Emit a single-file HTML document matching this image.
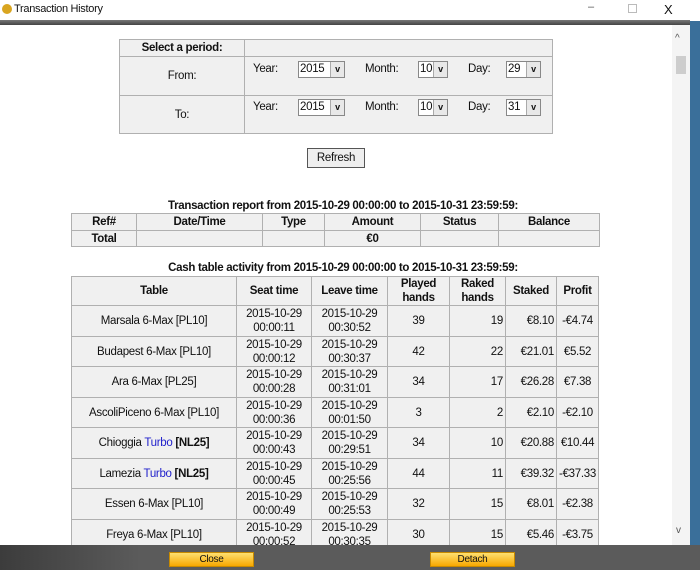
<!DOCTYPE html>
<html><head><style>
*{margin:0;padding:0;box-sizing:border-box}
body{width:700px;height:570px;overflow:hidden;background:#3a6f9a;font-family:"Liberation Sans",sans-serif;font-size:11.5px;letter-spacing:-0.3px;color:#111;position:relative}
.title{position:absolute;left:0;top:0;width:700px;height:21px;background:#fff;font-size:11px}
.bar{position:absolute;left:0;top:20px;width:690px;height:5px;background:linear-gradient(#777,#444)}
.content{position:absolute;left:0;top:25px;width:690px;height:520px;background:#fff;overflow:hidden}
.sb{position:absolute;left:672px;top:25px;width:18px;height:520px;background:#f4f4f4}
table{border-collapse:collapse;position:absolute;table-layout:fixed}
td,th{border:1px solid #b0b0b0;background:#f0f0f0;text-align:center;vertical-align:middle;font-weight:normal;line-height:14px;white-space:nowrap;overflow:hidden}
th{font-weight:bold}
.sel{position:absolute;border:1px solid #888;background:#fff;height:17px;line-height:15px;padding-left:1px;}
.sel b{position:absolute;right:0;top:0;width:14px;height:15px;background:#e8e8e8;border-left:1px solid #aaa;font-size:9px;text-align:center;font-weight:bold}
.lb{position:absolute}
.cap{position:absolute;font-weight:bold;text-align:center;width:700px;left:-7px}
.foot{position:absolute;left:0;top:545px;width:700px;height:25px;background:linear-gradient(90deg,#3c3c3c,#5b5b5b 20%,#5b5b5b)}
.btn{position:absolute;top:7px;width:85px;height:15px;background:linear-gradient(#ffe070,#f7a800);border:1px solid #c88a00;font-size:10px;text-align:center;line-height:13px}
.r{text-align:right;padding-right:2px}
.t{color:#2222cc}
</style></head><body>
<div class="title"><span style="position:absolute;left:2px;top:4px;width:10px;height:10px;border-radius:50%;background:#d9a520"></span><span style="position:absolute;left:14px;top:3px">Transaction History</span>
<span style="position:absolute;left:588px;top:1px;color:#555">–</span><span style="position:absolute;left:628px;top:4px;width:9px;height:9px;border:1px solid #bbb"></span><span style="position:absolute;left:664px;top:2px;font-size:13px">X</span></div>
<div class="bar"></div>
<div class="content">
<table style="left:119px;top:14px;width:434px">
<col style="width:125px"><col>
<tr style="height:17px"><th>Select a period:</th><td></td></tr>
<tr style="height:39px"><td>From:</td><td></td></tr>
<tr style="height:38px"><td>To:</td><td></td></tr>
</table>
<span class="lb" style="left:253px;top:38px">Year:</span><span class="sel" style="left:298px;top:36px;width:47px">2015<b>v</b></span>
<span class="lb" style="left:365px;top:38px">Month:</span><span class="sel" style="left:418px;top:36px;width:30px">10<b>v</b></span>
<span class="lb" style="left:468px;top:38px">Day:</span><span class="sel" style="left:506px;top:36px;width:35px">29<b>v</b></span>
<span class="lb" style="left:253px;top:76px">Year:</span><span class="sel" style="left:298px;top:74px;width:47px">2015<b>v</b></span>
<span class="lb" style="left:365px;top:76px">Month:</span><span class="sel" style="left:418px;top:74px;width:30px">10<b>v</b></span>
<span class="lb" style="left:468px;top:76px">Day:</span><span class="sel" style="left:506px;top:74px;width:35px">31<b>v</b></span>
<div style="position:absolute;left:307px;top:123px;width:58px;height:20px;border:1px solid #555;background:#eee;text-align:center;line-height:18px">Refresh</div>
<div class="cap" style="top:175px">Transaction report from 2015-10-29 00:00:00 to 2015-10-31 23:59:59:</div>
<table style="left:71px;top:188px;width:529px">
<col style="width:65px"><col style="width:126px"><col style="width:62px"><col style="width:96px"><col style="width:78px"><col>
<tr style="height:17px"><th>Ref#</th><th>Date/Time</th><th>Type</th><th>Amount</th><th>Status</th><th>Balance</th></tr>
<tr style="height:16px"><th>Total</th><td></td><td></td><th>€0</th><td></td><td></td></tr>
</table>
<div class="cap" style="top:237px">Cash table activity from 2015-10-29 00:00:00 to 2015-10-31 23:59:59:</div>
<table style="left:71px;top:251px;width:528px">
<col style="width:165px"><col style="width:75px"><col style="width:76px"><col style="width:62px"><col style="width:56px"><col style="width:51px"><col>
<tr style="height:29px"><th>Table</th><th>Seat time</th><th>Leave time</th><th>Played<br>hands</th><th>Raked<br>hands</th><th>Staked</th><th>Profit</th></tr>
<tr style="height:31px"><td>Marsala 6-Max [PL10]</td><td>2015-10-29<br>00:00:11</td><td>2015-10-29<br>00:30:52</td><td>39</td><td class="r">19</td><td class="r">€8.10</td><td>-€4.74</td></tr>
<tr style="height:30px"><td>Budapest 6-Max [PL10]</td><td>2015-10-29<br>00:00:12</td><td>2015-10-29<br>00:30:37</td><td>42</td><td class="r">22</td><td class="r">€21.01</td><td>€5.52</td></tr>
<tr style="height:31px"><td>Ara 6-Max [PL25]</td><td>2015-10-29<br>00:00:28</td><td>2015-10-29<br>00:31:01</td><td>34</td><td class="r">17</td><td class="r">€26.28</td><td>€7.38</td></tr>
<tr style="height:30px"><td>AscoliPiceno 6-Max [PL10]</td><td>2015-10-29<br>00:00:36</td><td>2015-10-29<br>00:01:50</td><td>3</td><td class="r">2</td><td class="r">€2.10</td><td>-€2.10</td></tr>
<tr style="height:31px"><td>Chioggia <span class="t">Turbo</span> <b>[NL25]</b></td><td>2015-10-29<br>00:00:43</td><td>2015-10-29<br>00:29:51</td><td>34</td><td class="r">10</td><td class="r">€20.88</td><td>€10.44</td></tr>
<tr style="height:30px"><td>Lamezia <span class="t">Turbo</span> <b>[NL25]</b></td><td>2015-10-29<br>00:00:45</td><td>2015-10-29<br>00:25:56</td><td>44</td><td class="r">11</td><td class="r">€39.32</td><td>-€37.33</td></tr>
<tr style="height:31px"><td>Essen 6-Max [PL10]</td><td>2015-10-29<br>00:00:49</td><td>2015-10-29<br>00:25:53</td><td>32</td><td class="r">15</td><td class="r">€8.01</td><td>-€2.38</td></tr>
<tr style="height:30px"><td>Freya 6-Max [PL10]</td><td>2015-10-29<br>00:00:52</td><td>2015-10-29<br>00:30:35</td><td>30</td><td class="r">15</td><td class="r">€5.46</td><td>-€3.75</td></tr>
</table>
</div>
<div class="sb"><div style="position:absolute;left:3px;top:8px;font-size:10px;color:#555">^</div><div style="position:absolute;left:4px;top:31px;width:10px;height:18px;background:#cdcdcd"></div><div style="position:absolute;left:4px;top:500px;font-size:10px;color:#555">v</div></div>
<div class="foot"><div class="btn" style="left:169px">Close</div><div class="btn" style="left:430px">Detach</div></div>
</body></html>
